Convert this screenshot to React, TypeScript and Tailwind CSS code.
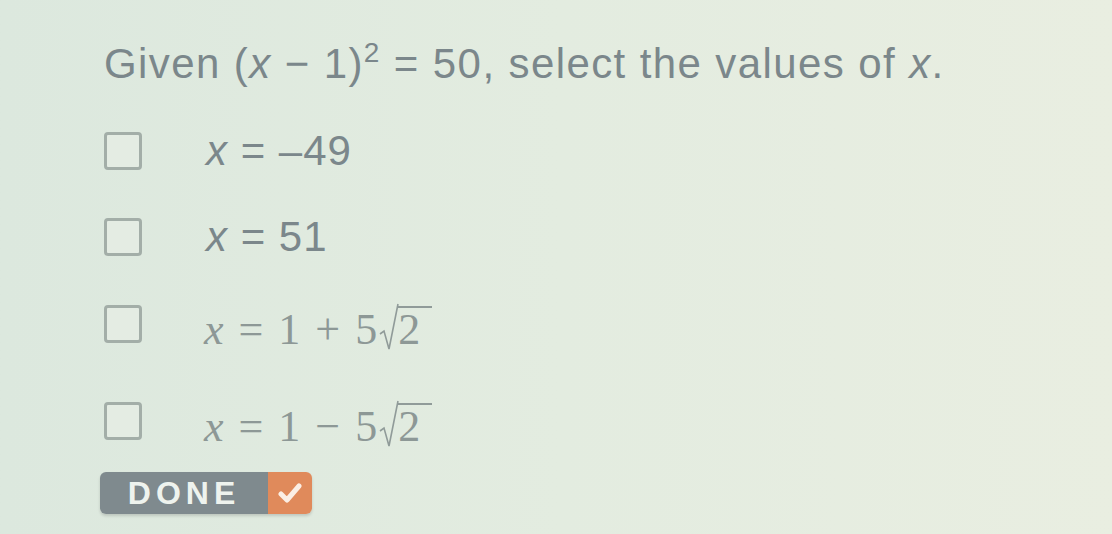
import React from 'react';

function Box() {
  return <div className="h-[38px] w-[38px] shrink-0 rounded-[4px] border-[3px] border-[#a3aea8] bg-[#e4ece3]" />;
}

function Sqrt2() {
  return (
    <span className="inline-flex items-end">
      <svg width="20" height="48" viewBox="0 0 20 48" className="mb-[1px]">
        <path d="M1 31 L5 28 L10 46 L19 1" fill="none" stroke="#909b99" strokeWidth="1.6" />
      </svg>
      <span className="-ml-[1px] border-t-[2px] border-[#909b99] pr-[10px] leading-[44px]">2</span>
    </span>
  );
}

const serif = { fontFamily: '"Liberation Serif", "Times New Roman", serif' };

function SerifOption({ op }: { op: string }) {
  return (
    <div className="flex h-[38px] items-start">
      <Box />
      <span className="-mt-[2px] ml-[62px] flex items-end text-[44px] leading-[44px] tracking-[2px] text-[#8d9896]" style={serif}>
        <i>x</i>&nbsp;=&nbsp;1&nbsp;{op}&nbsp;5<Sqrt2 />
      </span>
    </div>
  );
}

export default function App() {
  return (
    <div
      className="h-[534px] w-[1112px] overflow-hidden bg-gradient-to-r from-[#dce8de] via-[#e3ece0] to-[#e9eee1] text-[#7b878b]"
      style={{ fontFamily: '"Liberation Sans", Arial, sans-serif' }}
    >
      <div className="pl-[104px] pt-[40px]">
        <p className="h-[48px] text-[42px] leading-[48px] tracking-[1.4px]">
          Given (<i>x</i> − 1)
          <span className="relative -top-[16px] text-[28px] leading-none">2</span> = 50, select the values of <i>x</i>.
        </p>

        <div className="mt-[44px] flex h-[38px] items-center">
          <Box />
          <span className="ml-[64px] text-[42px] leading-[40px] tracking-[1px]"><i>x</i> = –49</span>
        </div>
        <div className="mt-[48px] flex h-[38px] items-center">
          <Box />
          <span className="ml-[64px] text-[42px] leading-[40px] tracking-[1px]"><i>x</i> = 51</span>
        </div>
        <div className="mt-[49px]">
          <SerifOption op="+" />
        </div>
        <div className="mt-[59px]">
          <SerifOption op="−" />
        </div>

        <button className="mt-[32px] -ml-[4px] flex h-[42px] overflow-hidden rounded-[6px] shadow-[0_2px_3px_rgba(0,0,0,0.15)]">
          <span className="flex h-full w-[168px] items-center justify-center bg-[#7f8a8e] text-[32px] font-bold tracking-[5px] text-[#eef3ee]">
            DONE
          </span>
          <span className="flex h-full w-[44px] items-center justify-center bg-[#e08a5b]">
            <svg width="24" height="22" viewBox="0 0 24 22">
              <path d="M3 12 L9 18 L21 4" fill="none" stroke="#fbeee4" strokeWidth="5" strokeLinecap="round" strokeLinejoin="round" />
            </svg>
          </span>
        </button>
      </div>
    </div>
  );
}
